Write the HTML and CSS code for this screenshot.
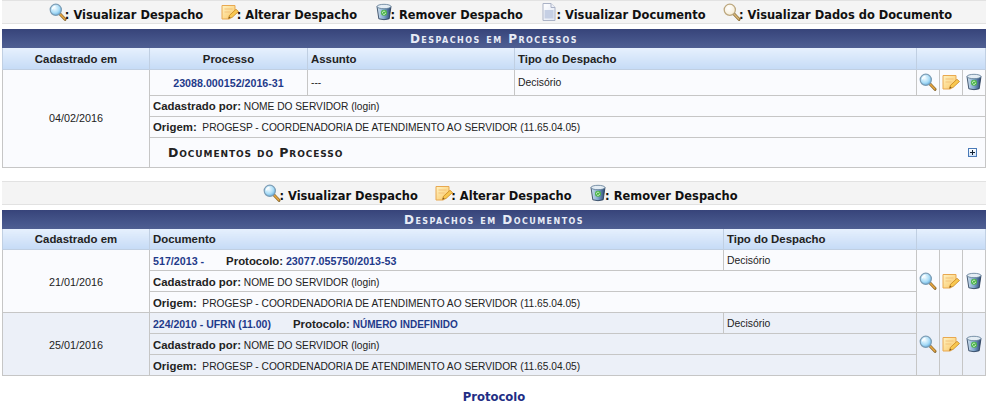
FILE: index.html
```html
<!DOCTYPE html>
<html lang="pt-BR">
<head>
<meta charset="utf-8">
<title>Despachos</title>
<link rel="stylesheet" href="styles.css">
</head>
<body>
<svg class="sprite" aria-hidden="true">
  <defs>
    <radialGradient id="lens" cx="40%" cy="35%" r="70%"><stop offset="0" stop-color="#f4fcff"/><stop offset=".6" stop-color="#a9dcf7"/><stop offset="1" stop-color="#5ba9dc"/></radialGradient>
    <radialGradient id="lensTan" cx="40%" cy="35%" r="70%"><stop offset="0" stop-color="#ffffff"/><stop offset="1" stop-color="#f4ead2"/></radialGradient>
    <linearGradient id="note" x1="0" y1="0" x2="1" y2="1"><stop offset="0" stop-color="#fff3c4"/><stop offset=".6" stop-color="#fcd88a"/><stop offset="1" stop-color="#f2b65a"/></linearGradient>
    <linearGradient id="bin" x1="0" y1="0" x2="1" y2="0"><stop offset="0" stop-color="#d3e4f1"/><stop offset=".5" stop-color="#7fa5cc"/><stop offset="1" stop-color="#274570"/></linearGradient>
    <linearGradient id="page" x1="0" y1="0" x2="1" y2="1"><stop offset="0" stop-color="#ffffff"/><stop offset="1" stop-color="#dfe5f2"/></linearGradient>
    <symbol id="i-view" viewBox="0 0 18 18">
      <path d="M10.5 10.5l5.5 5.8" stroke="#8a6a30" stroke-width="3" stroke-linecap="round"/>
      <path d="M11.5 11.5l4.3 4.5" stroke="#e9a63f" stroke-width="1.6" stroke-linecap="round"/>
      <circle cx="6.8" cy="6.8" r="5.6" fill="url(#lens)" stroke="#7d9db5" stroke-width="1.2"/>
      <path d="M3.4 6.4a3.5 3.5 0 0 1 3-3" fill="none" stroke="#fff" stroke-width="1.2"/>
    </symbol>
    <symbol id="i-data" viewBox="0 0 18 18">
      <path d="M10.5 10.5l5.5 5.8" stroke="#8a6a30" stroke-width="3" stroke-linecap="round"/>
      <path d="M11.5 11.5l4.3 4.5" stroke="#d9b878" stroke-width="1.6" stroke-linecap="round"/>
      <circle cx="6.8" cy="6.8" r="5.6" fill="url(#lensTan)" stroke="#bca77e" stroke-width="1.3"/>
    </symbol>
    <symbol id="i-edit" viewBox="0 0 18 18">
      <path d="M1 2.500h13v6.500l-5.500 7H1z" fill="url(#note)" stroke="#e8a850"/>
      <path d="M3.500 6h8M3.500 9h6" stroke="#f3c27a"/>
      <path d="M7.500 15.500l1-3.200 6.500-6 2.500 2.200-6.500 6z" fill="#f8c850" stroke="#c98722" stroke-width=".8"/>
      <path d="M7.500 15.500l.6-1.900 1.400 1.200z" fill="#7a5a28"/>
    </symbol>
    <symbol id="i-del" viewBox="0 0 18 18">
      <path d="M2 3.500l1.800 12.300q5.200 1.800 10.400 0L16 3.500z" fill="url(#bin)" stroke="#1f3550" stroke-width=".8"/>
      <ellipse cx="9" cy="3.500" rx="7" ry="2.200" fill="#e4edf4" stroke="#5d7a94" stroke-width=".8"/>
      <circle cx="9" cy="9.800" r="3" fill="#49b545"/>
      <path d="M7.400 9.800a1.600 1.600 0 0 1 2.900-.9M10.600 9.800a1.600 1.600 0 0 1-2.900.9" fill="none" stroke="#e8f8e0" stroke-width=".9"/>
    </symbol>
    <symbol id="i-doc" viewBox="0 0 18 18">
      <path d="M3 .5h8l4 4v13H3z" fill="url(#page)" stroke="#aab2c6"/>
      <path d="M11 .5v4h4" fill="#eef1f8" stroke="#aab2c6"/>
      <rect x="4.500" y="7" width="9" height="8.500" fill="#c5cfe4"/>
    </symbol>
  </defs>
</svg>

<div class="page">
  <div class="legend">
    <span class="legend-item"><svg class="ic"><use href="#i-view"/></svg>: Visualizar Despacho</span>
    <span class="legend-item"><svg class="ic"><use href="#i-edit"/></svg>: Alterar Despacho</span>
    <span class="legend-item"><svg class="ic"><use href="#i-del"/></svg>: Remover Despacho</span>
    <span class="legend-item"><svg class="ic"><use href="#i-doc"/></svg>: Visualizar Documento</span>
    <span class="legend-item"><svg class="ic"><use href="#i-data"/></svg>: Visualizar Dados do Documento</span>
  </div>

  <table class="list">
    <caption>Despachos em Processos</caption>
    <colgroup><col class="c-date"><col class="c-proc"><col class="c-assunto"><col class="c-tipo"><col class="c-ic"><col class="c-ic"><col class="c-ic"></colgroup>
    <thead>
      <tr>
        <th class="center">Cadastrado em</th>
        <th class="center">Processo</th>
        <th>Assunto</th>
        <th>Tipo do Despacho</th>
        <th colspan="3"></th>
      </tr>
    </thead>
    <tbody>
      <tr class="row-tall">
        <td class="center date date-long" rowspan="4">04/02/2016</td>
        <td class="center"><a class="link" href="#">23088.000152/2016-31</a></td>
        <td>---</td>
        <td class="kind">Decisório</td>
        <td class="icon"><svg class="ic"><use href="#i-view"/></svg></td>
        <td class="icon"><svg class="ic"><use href="#i-edit"/></svg></td>
        <td class="icon"><svg class="ic"><use href="#i-del"/></svg></td>
      </tr>
      <tr><td colspan="6"><b>Cadastrado por:</b> NOME DO SERVIDOR (login)</td></tr>
      <tr><td colspan="6"><b>Origem:</b>&nbsp; PROGESP - COORDENADORIA DE ATENDIMENTO AO SERVIDOR (11.65.04.05)</td></tr>
      <tr class="row-docs">
        <td colspan="6">
          <div class="docs">
            <span class="docs-title">Documentos do Processo</span>
            <span class="plus"></span>
          </div>
        </td>
      </tr>
    </tbody>
  </table>

  <div class="legend legend-second">
    <span class="legend-item"><svg class="ic"><use href="#i-view"/></svg>: Visualizar Despacho</span>
    <span class="legend-item"><svg class="ic"><use href="#i-edit"/></svg>: Alterar Despacho</span>
    <span class="legend-item"><svg class="ic"><use href="#i-del"/></svg>: Remover Despacho</span>
  </div>

  <table class="list">
    <caption>Despachos em Documentos</caption>
    <colgroup><col class="c-date"><col class="c-doc"><col class="c-tipo2"><col class="c-ic"><col class="c-ic"><col class="c-ic"></colgroup>
    <thead>
      <tr>
        <th class="center">Cadastrado em</th>
        <th>Documento</th>
        <th>Tipo do Despacho</th>
        <th colspan="3"></th>
      </tr>
    </thead>
    <tbody>
      <tr>
        <td class="center date" rowspan="3">21/01/2016</td>
        <td><a class="link" href="#">517/2013 -</a><b class="proto">Protocolo:</b> <a class="link" href="#">23077.055750/2013-53</a></td>
        <td class="kind">Decisório</td>
        <td class="icon" rowspan="3"><svg class="ic"><use href="#i-view"/></svg></td>
        <td class="icon" rowspan="3"><svg class="ic"><use href="#i-edit"/></svg></td>
        <td class="icon" rowspan="3"><svg class="ic"><use href="#i-del"/></svg></td>
      </tr>
      <tr><td colspan="2"><b>Cadastrado por:</b> NOME DO SERVIDOR (login)</td></tr>
      <tr><td colspan="2"><b>Origem:</b>&nbsp; PROGESP - COORDENADORIA DE ATENDIMENTO AO SERVIDOR (11.65.04.05)</td></tr>
      <tr class="alt">
        <td class="center date" rowspan="3">25/01/2016</td>
        <td><a class="link link-narrow" href="#">224/2010 - UFRN (11.00)</a><b class="proto">Protocolo:</b> <a class="link link-caps" href="#">NÚMERO INDEFINIDO</a></td>
        <td class="kind">Decisório</td>
        <td class="icon" rowspan="3"><svg class="ic"><use href="#i-view"/></svg></td>
        <td class="icon" rowspan="3"><svg class="ic"><use href="#i-edit"/></svg></td>
        <td class="icon" rowspan="3"><svg class="ic"><use href="#i-del"/></svg></td>
      </tr>
      <tr class="alt"><td colspan="2"><b>Cadastrado por:</b> NOME DO SERVIDOR (login)</td></tr>
      <tr class="alt"><td colspan="2"><b>Origem:</b>&nbsp; PROGESP - COORDENADORIA DE ATENDIMENTO AO SERVIDOR (11.65.04.05)</td></tr>
    </tbody>
  </table>

  <p class="back"><a href="#">Protocolo</a></p>
</div>
</body>
</html>
```

FILE: styles.css
```css
html, body {
  margin: 0;
  padding: 0;
  background: #fff;
}

body {
  font-family: "Liberation Sans", Arial, sans-serif;
  font-size: 10.2px;
  color: #222;
}

.sprite {
  position: absolute;
  width: 0;
  height: 0;
}

.page {
  width: 984px;
  margin-left: 2px;
}

.ic {
  width: 18px;
  height: 18px;
  display: block;
  flex: none;
}

.legend {
  box-sizing: border-box;
  height: 24px;
  display: flex;
  justify-content: center;
  align-items: center;
  gap: 17.5px;
  padding-left: 13px;
  background: #f4f4f4;
  border-top: 1px solid #e2e2e2;
  border-bottom: 1px solid #e2e2e2;
  font-family: "DejaVu Sans", Verdana, sans-serif;
  font-weight: bold;
  font-size: 11.45px;
  line-height: 12px;
  color: #111;
}

.legend .ic {
  margin-right: -2px;
}

.legend-second {
  margin-top: 13px;
}

.legend-item {
  display: flex;
  align-items: flex-end;
}

.list {
  width: 984px;
  table-layout: fixed;
  border-collapse: collapse;
  margin-top: 5px;
  border-left: 1px solid #c6c6c6;
}

.list caption {
  height: 18px;
  padding-top: 1px;
  line-height: 18px;
  background: linear-gradient(#37447a, #47578c 70%, #4f5f92);
  color: #e8ecf6;
  font-family: "DejaVu Sans", Verdana, sans-serif;
  font-weight: bold;
  font-size: 12px;
  font-variant: small-caps;
  letter-spacing: 1.45px;
  text-align: center;
}

.c-date { width: 147px; }
.c-proc { width: 158px; }
.c-assunto { width: 207px; }
.c-tipo { width: 402px; }
.c-ic { width: 23px; }
.c-doc { width: 574px; }
.c-tipo2 { width: 193px; }

.list th {
  height: 21px;
  padding: 1px 3px 0;
  box-sizing: border-box;
  background: linear-gradient(#e6f0fd, #c6dbf6);
  border: 1px solid #c0cfe2;
  border-top: 0;
  font-size: 11.4px;
  font-weight: bold;
  text-align: left;
  color: #222;
}

.list td {
  height: 21px;
  padding: 1px 3px 0;
  box-sizing: border-box;
  background: #fafbfe;
  border: 1px solid #c6c6c6;
  color: #222;
}

.list td b {
  font-size: 11.4px;
}

.list .date {
  font-size: 10.8px;
}

.list .date-long {
  padding-bottom: 2px;
}

.list .kind {
  font-size: 10.4px;
}

.list .row-tall td { height: 26px; }
.list .row-docs td { height: 30px; }
.list .alt td { background: #ecf0f8; }

.list th.center,
.list td.center {
  text-align: center;
}

.list td.icon {
  padding: 0 2px;
}

.link {
  color: #1f3a8a;
  font-size: 10.7px;
  font-weight: bold;
  text-decoration: none;
}

.link-narrow {
  font-size: 10.5px;
}

.link-caps {
  font-size: 10px;
}

.list td b.proto {
  margin-left: 22px;
}

.docs {
  display: flex;
  justify-content: space-between;
  align-items: center;
  padding: 0 5px 0 15px;
}

.docs-title {
  font-family: "DejaVu Sans", Verdana, sans-serif;
  font-weight: bold;
  font-size: 12.5px;
  font-variant: small-caps;
  letter-spacing: 0.9px;
  color: #222;
}

.plus {
  position: relative;
  width: 9px;
  height: 9px;
  box-sizing: border-box;
  border: 1px solid #4a7ab8;
  background: linear-gradient(#fff, #cfe0f4);
}

.plus::before,
.plus::after {
  content: "";
  position: absolute;
  background: #123;
}

.plus::before { left: 1px; top: 3px; width: 5px; height: 1px; }
.plus::after { left: 3px; top: 1px; width: 1px; height: 5px; }

.back {
  margin: 14px 0 0;
  text-align: center;
  font-family: "DejaVu Sans", Verdana, sans-serif;
  font-weight: bold;
  font-size: 11.6px;
}

.back a {
  color: #222e85;
  text-decoration: none;
}
```
